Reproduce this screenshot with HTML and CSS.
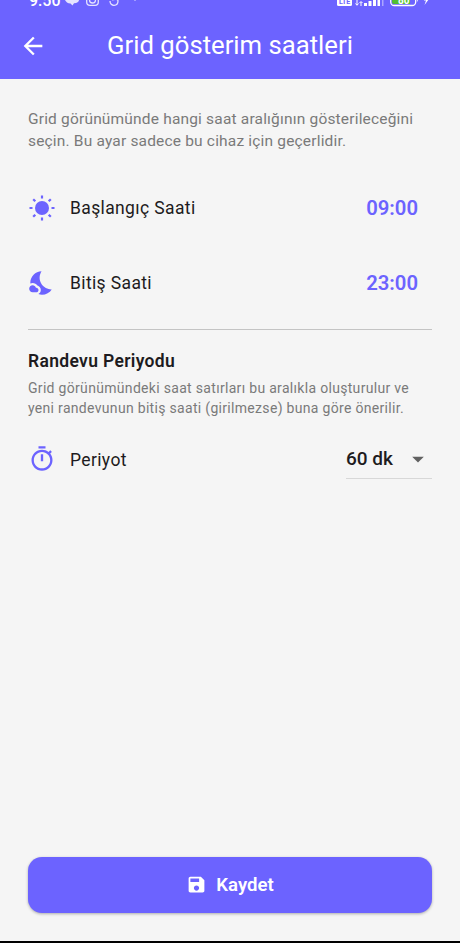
FILE: index.html
```html
<!DOCTYPE html>
<html lang="tr">
<head>
<meta charset="utf-8">
<title>Grid gösterim saatleri</title>
<link rel="stylesheet" href="styles.css">
</head>
<body>
<div class="screen">
  <header class="appbar">
    <div class="status">
      <span class="clock">9:50</span>
      <svg class="notices" viewBox="0 0 76 10" width="76" height="10">
        <path d="M0 0h14c0 2-2 3-5 3.300L7.500 5.500 5.500 3.500C2.500 3.300 1 2 0 0z" fill="currentColor"/>
        <g fill="none" stroke="currentColor" stroke-width="1.300">
          <path d="M21.700-3v5q0 3.300 3.300 3.300h5q3.300 0 3.300-3.300v-5"/>
          <circle cx="27.500" cy="0" r="3"/>
          <path d="M45 1c0 6 8 5.500 8 0 0-2-3-2-6-1"/>
        </g>
        <circle cx="70" cy="0" r=".8" fill="currentColor"/>
      </svg>
      <svg class="system" viewBox="0 0 96 10" width="96" height="10">
        <rect x="0" y="-5" width="15" height="11" rx="1.500" fill="#fff"/>
        <text x="2" y="4" class="lte">LTE</text>
        <path d="M20 0v5M18.500 3.500 20 5.300l1.500-1.800M24 6V2M22.500 3 24 1.500 25.500 3" fill="none" stroke="#fff"/>
        <path d="M27 3h3v3h-3zM31.500 1h3v5h-3zM36-1h3v7h-3zM40.500-3h2.500v9h-2.500z" fill="#fff"/>
        <path d="M45-5h1.500V6H45z" fill="#aaa5ff"/>
        <rect x="53.700" y="-7" width="25" height="12.500" rx="3.500" fill="#6c63ff" stroke="#fff" stroke-width="1.300"/>
        <path d="M55-1h18v5H57q-2 0-2-2z" fill="#52bf31"/>
        <text x="61" y="3.500" class="charge">80</text>
        <path d="M80-1q1.500 1 0 3M90-2h-3v2.500h2L87.500 5 92-1z" fill="#fff"/>
      </svg>
    </div>
    <div class="titlebar">
      <svg class="icon" viewBox="0 0 24 24"><path d="M20 11H7.830l5.590-5.590L12 4l-8 8 8 8 1.410-1.410L7.830 13H20v-2z"/></svg>
      <h1>Grid gösterim saatleri</h1>
    </div>
  </header>
  <main>
    <p class="intro">Grid görünümünde hangi saat aralığının gösterileceğini<br>seçin. Bu ayar sadece bu cihaz için geçerlidir.</p>
    <div class="row">
      <svg class="icon sun" viewBox="0 0 28 28"><circle cx="14" cy="14" r="7"/><path d="M14 1.500v3M14 23.500v3M1.500 14h3M23.500 14h3M5.200 5.200l2.100 2.100M20.700 20.700l2.100 2.100M5.200 22.800l2.100-2.100M20.700 7.300l2.100-2.100"/></svg>
      <span class="label">Başlangıç Saati</span>
      <span class="time">09:00</span>
    </div>
    <div class="row">
      <svg class="icon" viewBox="0 0 24 24"><path d="M11.100 12.080c-2.330-4.510-.5-8.480.53-10.070C6.270 2.200 1.980 6.590 1.980 12c0 .14.020.28.020.42.620-.27 1.290-.42 2-.42 1.660 0 3.180.83 4.100 2.150 1.670.48 2.900 2.020 2.900 3.850 0 1.520-.87 2.830-2.120 3.510.98.320 2.030.5 3.110.5 3.500 0 6.580-1.800 8.370-4.520-2.360.23-6.980-.97-9.260-5.410z"/><path d="M7 16h-.18C6.400 14.840 5.300 14 4 14c-1.660 0-3 1.340-3 3s1.340 3 3 3h3c1.100 0 2-.9 2-2s-.9-2-2-2z"/></svg>
      <span class="label">Bitiş Saati</span>
      <span class="time">23:00</span>
    </div>
    <hr>
    <h2>Randevu Periyodu</h2>
    <p class="hint">Grid görünümündeki saat satırları bu aralıkla oluşturulur ve<br>yeni randevunun bitiş saati (girilmezse) buna göre önerilir.</p>
    <div class="row period">
      <svg class="icon" viewBox="0 0 24 24"><path d="M15 1H9v2h6V1zm-4 13h2V8h-2v6zm8.030-6.610 1.420-1.420c-.43-.51-.9-.99-1.410-1.410l-1.420 1.420C16.070 4.740 14.120 4 12 4c-4.970 0-9 4.030-9 9s4.020 9 9 9 9-4.030 9-9c0-2.120-.74-4.070-1.970-5.610zM12 20c-3.870 0-7-3.130-7-7s3.130-7 7-7 7 3.130 7 7-3.130 7-7 7z"/></svg>
      <span class="label">Periyot</span>
      <div class="select">
        <span>60 dk</span>
        <svg class="icon caret" viewBox="0 0 24 24"><path d="M7 10l5 5 5-5z"/></svg>
      </div>
    </div>
  </main>
  <button class="save" type="button">
    <svg class="icon" viewBox="0 0 24 24"><path d="M17 3H5c-1.110 0-2 .9-2 2v14c0 1.100.89 2 2 2h14c1.100 0 2-.9 2-2V7l-4-4zm-5 16c-1.660 0-3-1.340-3-3s1.340-3 3-3 3 1.340 3 3-1.340 3-3 3zm3-10H5V5h10v4z"/></svg>
    <span>Kaydet</span>
  </button>
  <div class="navline"></div>
</div>
</body>
</html>
```
FILE: styles.css
```css
* { box-sizing: border-box; }
body { margin: 0; font-family: Roboto, "Noto Sans", sans-serif; color: #1d1b20; }
.screen { display: flex; flex-direction: column; width: 460px; height: 943px; background: #f5f5f5; overflow: hidden; }
.appbar { flex: none; height: 79px; background: #6c63ff; color: #fff; }
.status { display: flex; height: 12px; padding-left: 29px; overflow: hidden; }
.clock { flex: none; width: 36px; margin-top: -9px; font-size: 16px; font-weight: 500; line-height: 19px; }
.notices { flex: none; color: #e5e3ff; }
.system { flex: none; margin-left: 196px; }
.lte { font-size: 7px; font-weight: 700; fill: #6c63ff; }
.charge { font-size: 10px; font-weight: 700; fill: #fff; }
.icon { flex: none; width: 28px; height: 28px; fill: currentColor; }
.titlebar { display: flex; align-items: center; height: 67px; padding-left: 19px; }
h1 { margin: 0 0 2px 60px; font-size: 25.700px; font-weight: 400; line-height: 32px; white-space: nowrap; }
main { flex: 1; padding: 29px 28px 0; }
p { margin: 0; color: #7a7a7a; white-space: nowrap; }
.intro { font-size: 15.500px; line-height: 22px; letter-spacing: .18px; }
.row { display: flex; align-items: center; height: 75px; padding-right: 14px; color: #6c63ff; }
.intro + .row { margin-top: 18px; }
.sun path { fill: none; stroke: currentColor; stroke-width: 2.200; }
.label { flex: 1; margin-left: 14px; padding-top: 1px; color: #1d1b20; font-size: 17.500px; letter-spacing: .37px; }
.time { font-size: 20.300px; font-weight: 600; }
hr { height: 1px; margin: 9px 0 0; border: 0; background: #c4c4c4; }
h2 { margin: 19px 0 0; font-size: 17.500px; font-weight: 600; line-height: 24px; letter-spacing: .33px; }
.hint { margin-top: 5px; font-size: 14px; line-height: 20px; letter-spacing: .31px; }
.period { height: 56px; margin-top: 13px; padding: 0; }
.select { display: flex; align-items: center; justify-content: space-between; width: 86px; height: 39px; border-bottom: 1px solid #d8d8d8; color: #1d1b20; font-size: 19px; font-weight: 500; }
.caret { color: #616161; }
.save { flex: none; display: flex; align-items: center; justify-content: center; gap: 9px; height: 56px; margin: 0 28px 28px; padding: 0 0 1px; border: 0; border-radius: 14px; background: #6c63ff; color: #fff; font: 600 18.600px Roboto, "Noto Sans", sans-serif; box-shadow: 0 1px 3px rgba(0,0,0,.3); }
.save .icon { width: 21px; height: 21px; }
.navline { flex: none; height: 2px; background: #000; }
```
